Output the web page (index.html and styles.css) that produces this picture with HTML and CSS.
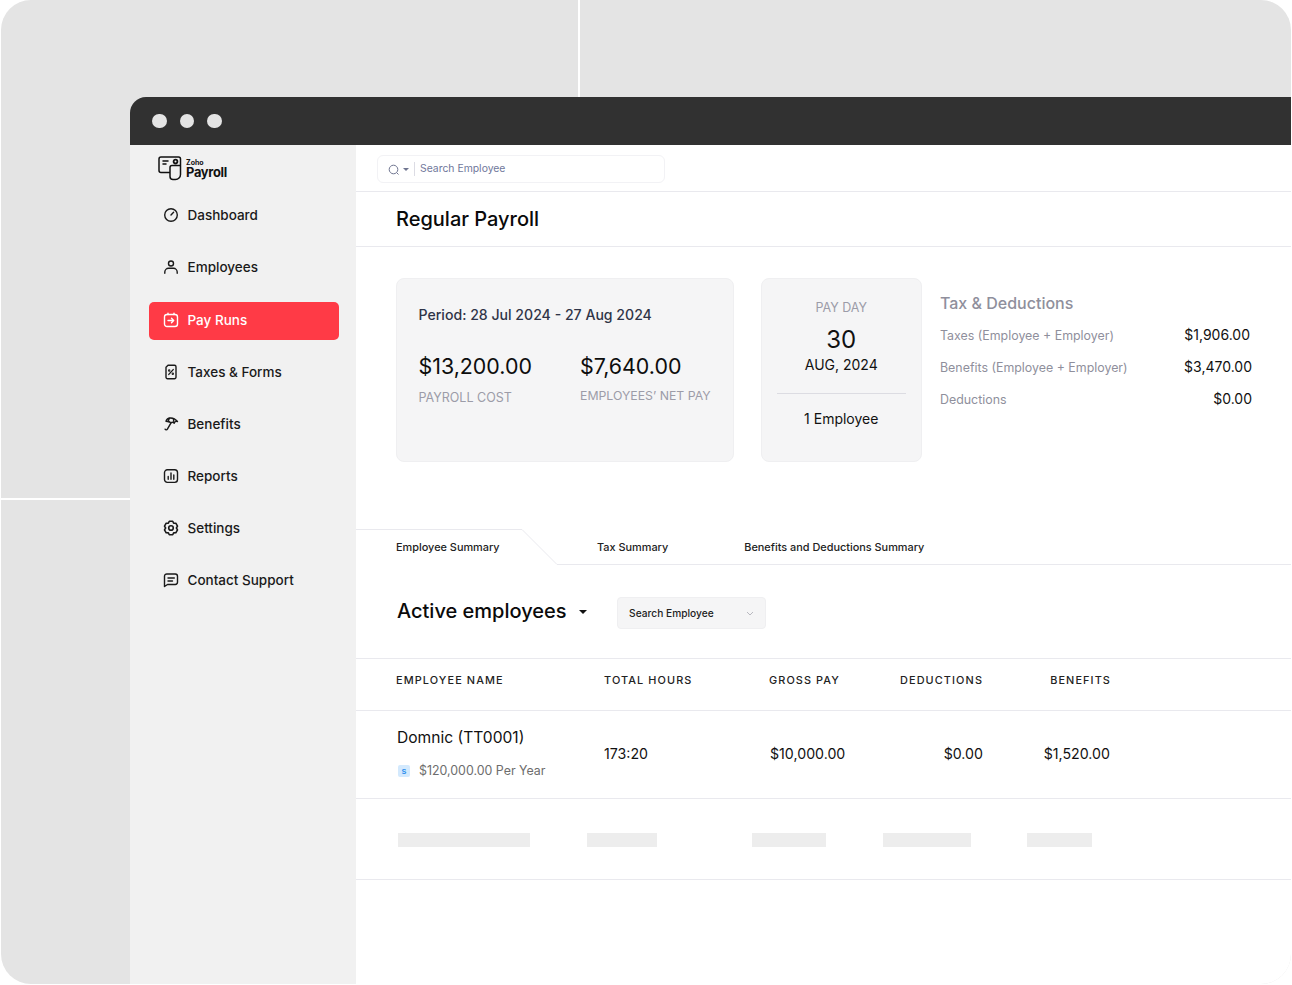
FILE: index.html
```html
<!DOCTYPE html>
<html lang="en">
<head>
<meta charset="utf-8">
<title>Regular Payroll</title>
<link rel="stylesheet" href="styles.css">
</head>
<body>
<div class="stage">
  <span class="seam seam-v"></span>
  <span class="seam seam-h"></span>
  <div class="window">
    <div class="titlebar"><i></i><i></i><i></i></div>
    <div class="app">
      <aside class="sidebar">
        <div class="logo">
          <svg class="logo-icon" width="25" height="25" viewBox="0 0 25 25" fill="none" stroke="#111" stroke-width="1.500" stroke-linejoin="round" stroke-linecap="round"><path d="M12 16.500H3a2 2 0 0 1-2-2V3a2 2 0 0 1 2-2h17.500a2 2 0 0 1 2 2v15.500a5 5 0 0 1-5 5H15a3 3 0 0 1-3-3v-9a2 2 0 0 1 2-2h8.500"/><path d="M5 5h5M5 8h3"/><circle cx="17.500" cy="5.600" r="1.900" stroke-width="1.800"/></svg>
          <div class="logo-text"><span class="logo-zoho">Zoho</span><span class="logo-name">Payroll</span></div>
        </div>
        <nav class="nav">
          <a class="nav-item"><svg viewBox="0 0 16 16" class="ico"><circle cx="8" cy="8" r="6.300"/><path d="M8 8l2.600-2.800"/></svg>Dashboard</a>
          <a class="nav-item"><svg viewBox="0 0 16 16" class="ico"><circle cx="8" cy="4.500" r="2.500"/><path d="M1.800 14.300v-1.300c0-2 1.800-3.700 3.700-3.700h5c1.900 0 3.700 1.700 3.700 3.700v1.300"/></svg>Employees</a>
          <a class="nav-item active"><svg viewBox="0 0 16 16" class="ico"><rect x="1.500" y="2.500" width="13" height="12" rx="2.500"/><path d="M5 1.200v1.300M11 1.200v1.300M5 8.500h5.500M8.500 6.300l2.200 2.200-2.200 2.200"/></svg>Pay Runs</a>
          <a class="nav-item"><svg viewBox="0 0 16 16" class="ico"><path d="M5 1.300h6.500a1.500 1.500 0 0 1 1.500 1.500v10.400a1.500 1.500 0 0 1-1.500 1.500h-7A1.500 1.500 0 0 1 3 13.200V3.300z"/><path d="M5.800 10.400l4.400-4.800"/><circle cx="6.200" cy="6.500" r=".5"/><circle cx="9.800" cy="9.700" r=".5"/></svg>Taxes &amp; Forms</a>
          <a class="nav-item"><svg viewBox="0 0 16 16" class="ico"><path d="M3 5.200C4 1.500 10 .2 14.500 5.500c-1.500-.4-2.600 0-3.300 1.500-1-.9-2.300-1-3.300-.2-.8-1-2.500-1.500-4.900-1.600z"/><path d="M6.500 2.300c-.8 1-1.200 2-1 3.200M10.500 2.800c0 1 0 2.500.7 4.200M8 6.800L4.400 13.200c-.5.900-1.800.9-2.300 0"/></svg>Benefits</a>
          <a class="nav-item"><svg viewBox="0 0 16 16" class="ico"><rect x="1.500" y="1.800" width="13" height="12.600" rx="2.800"/><path d="M5.200 11.200V8.500M8 11.200V5M10.800 11.200V7"/></svg>Reports</a>
          <a class="nav-item"><svg viewBox="1 .4 14 14" class="ico"><path d="M6.500 1.500h3l.8 1.600 1.900.1 1.500 2.600-1 1.600 1 1.600-1.500 2.600-1.900.1-.8 1.600h-3l-.8-1.600-1.900-.1-1.500-2.600 1-1.600-1-1.600 1.500-2.600 1.900-.1z"/><circle cx="8" cy="7.400" r="2"/></svg>Settings</a>
          <a class="nav-item"><svg viewBox="0 0 16 16" class="ico"><path d="M4 2h8.300a2.300 2.300 0 0 1 2.200 2.300v6a2.300 2.300 0 0 1-2.200 2.200H4.500l-3 2V4.300A2.300 2.300 0 0 1 4 2z"/><path d="M5 6h6.300M5 9h4.500"/></svg>Contact Support</a>
        </nav>
      </aside>
      <main class="main">
        <div class="topbar">
          <div class="searchbox">
            <svg class="search-ico" viewBox="0 0 12 12" width="12" height="12" fill="none" stroke="#6f7590" stroke-width="1"><circle cx="5.500" cy="5.500" r="4.300"/><path d="M8.700 8.700L10.500 10.500"/></svg>
            <span class="search-caret"></span>
            <span class="search-text">Search Employee</span>
          </div>
        </div>
        <header class="pagehead"><h1>Regular Payroll</h1></header>
        <section class="summary">
          <div class="card card-period">
            <div class="period">Period: 28 Jul 2024 - 27 Aug 2024</div>
            <div class="totals">
              <div class="total">
                <div class="amount">$13,200.00</div>
                <div class="label">PAYROLL COST</div>
              </div>
              <div class="total total-net">
                <div class="amount">$7,640.00</div>
                <div class="label">EMPLOYEES’ NET PAY</div>
              </div>
            </div>
          </div>
          <div class="card card-payday">
            <div class="pd-label">PAY DAY</div>
            <div class="pd-day">30</div>
            <div class="pd-month">AUG, 2024</div>
            <div class="pd-rule"></div>
            <div class="pd-emp">1 Employee</div>
          </div>
          <div class="tax">
            <h2>Tax &amp; Deductions</h2>
            <div class="tax-row"><span>Taxes (Employee + Employer)</span><b class="tax-first">$1,906.00</b></div>
            <div class="tax-row"><span>Benefits (Employee + Employer)</span><b>$3,470.00</b></div>
            <div class="tax-row"><span>Deductions</span><b>$0.00</b></div>
          </div>
        </section>
        <div class="tabs">
          <div class="tab tab-active">Employee Summary
            <svg class="tab-shape" width="206" height="37" viewBox="0 0 206 37" fill="none"><path d="M0 .5H166L201 35.500H206" stroke="#e9e9ee"/></svg>
          </div>
          <div class="tab tab-tax">Tax Summary</div>
          <div class="tab tab-ben">Benefits and Deductions Summary</div>
        </div>
        <div class="filter">
          <h2 class="active-title">Active employees</h2>
          <span class="title-caret"></span>
          <div class="select">Search Employee
            <svg width="8" height="5" viewBox="0 0 8 5" fill="none" stroke="#a9a9b2" stroke-width=".8"><path d="M1 1l3 3 3-3"/></svg>
          </div>
        </div>
        <div class="row row-head">
          <span>EMPLOYEE NAME</span><span>TOTAL HOURS</span><span>GROSS PAY</span><span class="r">DEDUCTIONS</span><span class="r">BENEFITS</span>
        </div>
        <div class="row row-data">
          <div class="emp">
            <div class="emp-name">Domnic (TT0001)</div>
            <div class="emp-pay"><span class="badge">s</span>$120,000.00 Per Year</div>
          </div>
          <span>173:20</span><span class="gross">$10,000.00</span><span class="r">$0.00</span><span class="r ben">$1,520.00</span>
        </div>
        <div class="row row-skel">
          <i class="sk sk1"></i><i class="sk sk2"></i><i class="sk sk3"></i><i class="sk sk4"></i><i class="sk sk5"></i>
        </div>
      </main>
    </div>
  </div>
</div>
</body>
</html>
```
FILE: styles.css
```css
* { box-sizing: border-box; }
html, body { margin: 0; padding: 0; background: #fff; }
body { font-family: Inter, "Liberation Sans", sans-serif; color: #000; height: 985px; overflow: hidden; }
.stage {
  position: relative;
  margin-left: 1px;
  width: 1289.500px;
  height: 983.500px;
  background: #e4e4e4;
  border-radius: 30px;
  overflow: hidden;
  padding: 97px 0 0 129px;
}
.seam { position: absolute; background: #fff; }
.seam-v { left: 577px; top: 0; width: 2px; height: 97px; }
.seam-h { left: 0; top: 498px; width: 129px; height: 2px; }
.window { display: flex; flex-direction: column; height: 887px; }
.titlebar {
  height: 48px;
  background: #313131;
  border-radius: 16px 0 0 0;
  display: flex;
  align-items: center;
  gap: 13px;
  padding-left: 22px;
  flex: none;
}
.titlebar i { width: 14.500px; height: 14.500px; border-radius: 50%; background: #e4e4e4; }
.app { display: flex; flex: 1; min-height: 0; }
.sidebar { width: 226px; flex: none; background: #f1f1f1; padding: 10px 17px 0 19px; }
.logo { display: flex; align-items: flex-start; height: 26px; margin-left: 9px; gap: 3px; }
.logo-icon { flex: none; margin-top: 1px; }
.logo-text { display: flex; flex-direction: column; margin-top: 3.500px; }
.logo-zoho { font-size: 7px; line-height: 7px; font-weight: 700; color: #111; }
.logo-name { font-size: 12.900px; line-height: 14px; font-weight: 700; letter-spacing: -.3px; color: #111; }
.nav { display: flex; flex-direction: column; gap: 14px; margin-top: 15px; }
.nav-item {
  display: flex;
  align-items: center;
  gap: 8.500px;
  height: 38px;
  padding-left: 14px;
  font-size: 13.500px;
  font-weight: 500;
  color: #1a1a1a;
  border-radius: 5px;
}
.nav-item.active { background: #ff3a46; color: #fff; margin: 2px 0 -1px; padding-bottom: 2px; }
.ico { width: 16px; height: 16px; flex: none; fill: none; stroke: #1a1a1a; stroke-width: 1.400; stroke-linecap: round; stroke-linejoin: round; }
.active .ico { stroke: #fff; }
.main { flex: 1; min-width: 0; background: #fff; display: flex; flex-direction: column; }
.topbar { height: 47px; border-bottom: 1px solid #e9e9ee; padding: 10px 0 0 21px; flex: none; }
.searchbox {
  width: 288px;
  height: 28px;
  border: 1px solid #f2f2f5;
  border-radius: 6px;
  display: flex;
  align-items: center;
  padding-left: 10px;
}
.search-ico { margin-top: 1px; }
.search-caret { width: 0; height: 0; margin-left: 3px; border: 3px solid transparent; border-top: 3px solid #6f7590; border-bottom: 0; }
.search-text { margin-left: 5px; padding-left: 5px; border-left: 1px solid #dcdce4; font-size: 10.400px; line-height: 14px; color: #70779b; }
.pagehead { height: 55px; border-bottom: 1px solid #e9e9ee; padding-left: 40px; display: flex; align-items: center; flex: none; }
.pagehead h1 { margin: 0; font-size: 20px; font-weight: 500; color: #0a0a0a; }
.summary { display: flex; align-items: flex-start; padding: 31px 0 0 40px; height: 282px; flex: none; }
.card { background: #f5f5f6; border: 1px solid #efeff1; border-radius: 8px; height: 184px; flex: none; }
.card-period { width: 338px; padding: 27px 0 0 21.500px; }
.period { font-size: 14.100px; line-height: 18px; font-weight: 500; color: #2f3448; }
.totals { display: flex; margin-top: 27px; }
.total { width: 161.500px; }
.total-net { width: auto; }
.amount { font-size: 21.400px; line-height: 30px; color: #0d0d0d; }
.label { margin-top: 9px; font-size: 12.500px; line-height: 16px; color: #9c9ca8; }
.total-net .label { margin-top: 7px; font-size: 12.300px; }
.card-payday { width: 160.500px; margin-left: 27px; text-align: center; padding-top: 21px; }
.pd-label { font-size: 12.500px; line-height: 16px; color: #9c9ca8; }
.pd-day { font-size: 24px; line-height: 30px; margin-top: 9px; color: #111; }
.pd-month { font-size: 14px; line-height: 18px; margin-top: 1px; color: #111; }
.pd-rule { height: 1px; background: #dcdce2; margin: 19px 15px 0; }
.pd-emp { font-size: 14px; line-height: 18px; margin-top: 16px; color: #111; }
.tax { margin-left: 18.500px; width: 312px; padding-top: 15px; }
.tax h2 { margin: 0; font-size: 16px; line-height: 20px; font-weight: 500; color: #8f8f9c; }
.tax-row { display: flex; justify-content: space-between; align-items: center; height: 32.300px; font-size: 12.400px; color: #8f8f9c; }
.tax-row:nth-of-type(1) { margin-top: 6px; }
.tax-row b { font-size: 14px; font-weight: 400; color: #111; margin-bottom: 2px; }
.tax-row b.tax-first { margin-right: 2px; }
.tabs { position: relative; height: 37px; padding-bottom: 2px; display: flex; align-items: center; flex: none; font-size: 10.900px; font-weight: 500; color: #222; }
.tab { white-space: nowrap; }
.tab-active { margin-left: 40px; width: 201px; }
.tab-shape { position: absolute; left: 0; top: 0; }
.tab-ben { margin-left: 76px; }
.tabs::after { content: ""; position: absolute; left: 206px; right: 0; bottom: 1px; height: 1px; background: #e9e9ee; }
.filter { display: flex; align-items: center; height: 92px; padding-left: 40px; flex: none; }
.active-title { margin: 0 0 2px 1px; font-size: 20px; font-weight: 500; color: #0a0a0a; }
.title-caret { width: 0; height: 0; margin-left: 12.500px; border: 4px solid transparent; border-top: 4.500px solid #111; border-bottom: 0; }
.select {
  margin: 2px 0 0 30px;
  width: 149px;
  height: 32px;
  background: #f5f5f6;
  border: 1px solid #efeff1;
  border-radius: 4px;
  display: flex;
  align-items: center;
  justify-content: space-between;
  padding: 0 11px;
  font-size: 10.200px;
  font-weight: 500;
  color: #222;
}
.row {
  display: grid;
  grid-template-columns: 208px 165px 131px 83px 128px;
  align-items: center;
  padding-left: 40px;
  border-top: 1px solid #e9e9ee;
  flex: none;
}
.r { text-align: right; }
.row-head { height: 52px; padding-bottom: 10px; font-size: 10.900px; font-weight: 500; letter-spacing: 1.100px; color: #222; }
.row-data { height: 88px; padding-bottom: 2px; font-size: 14.200px; color: #111; }
.gross { padding-left: 1px; }
.ben { padding-right: 1px; }
.emp { padding: 0 0 0 1px; }
.emp-name { font-size: 15.600px; line-height: 20px; color: #111; }
.emp-pay { display: flex; align-items: center; gap: 9px; margin-top: 15px; font-size: 12.400px; line-height: 16px; color: #6d6d6d; }
.badge { width: 12px; height: 12px; border-radius: 2px; background: #d3e9fd; color: #2f8fee; font-size: 9px; font-weight: 600; line-height: 12px; text-align: center; margin-left: 1px; }
.row-skel { height: 81.500px; display: flex; align-items: center; border-bottom: 1px solid #e9e9ee; padding: 2px 0 0 42px; }
.sk { display: block; height: 14px; background: #ededed; flex: none; }
.sk1 { width: 132px; }
.sk2 { width: 70px; margin-left: 57px; }
.sk3 { width: 74px; margin-left: 95px; }
.sk4 { width: 88px; margin-left: 57px; }
.sk5 { width: 65px; margin-left: 56px; }
```
